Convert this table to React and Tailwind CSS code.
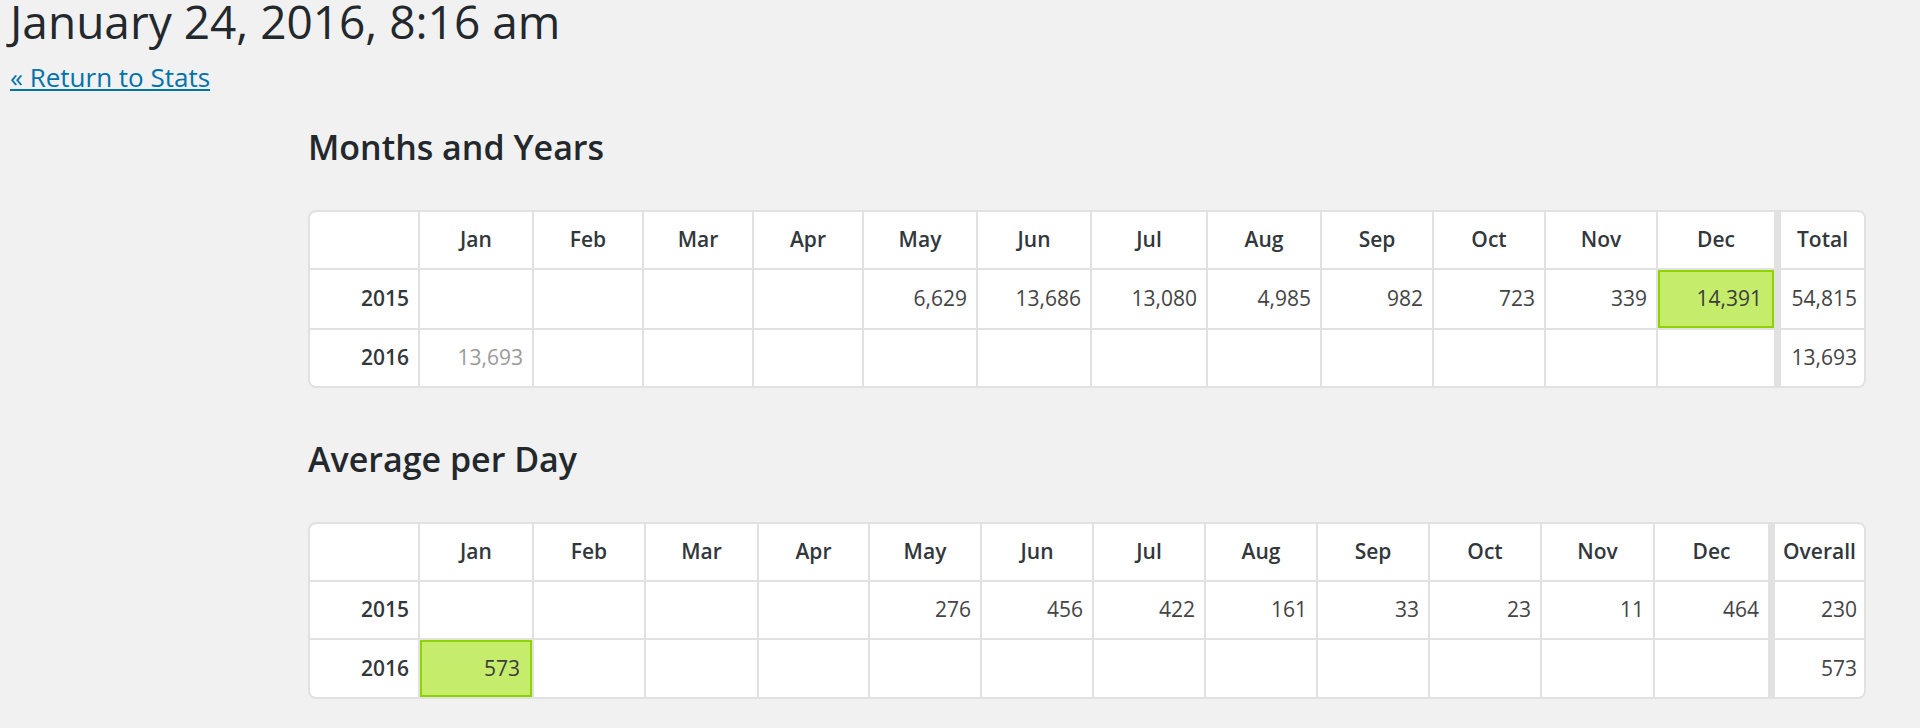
const MONTHS = ['Jan', 'Feb', 'Mar', 'Apr', 'May', 'Jun', 'Jul', 'Aug', 'Sep', 'Oct', 'Nov', 'Dec'];

const monthsYears = {
  last: 'Total',
  rows: [
    {
      year: '2015',
      values: [null, null, null, null, '6,629', '13,686', '13,080', '4,985', '982', '723', '339', '14,391'],
      hi: 11,
      total: '54,815',
    },
    {
      year: '2016',
      values: ['13,693', null, null, null, null, null, null, null, null, null, null, null],
      muted: 0,
      total: '13,693',
    },
  ],
};

const averages = {
  last: 'Overall',
  rows: [
    {
      year: '2015',
      values: [null, null, null, null, '276', '456', '422', '161', '33', '23', '11', '464'],
      total: '230',
    },
    {
      year: '2016',
      values: ['573', null, null, null, null, null, null, null, null, null, null, null],
      hi: 0,
      total: '573',
    },
  ],
};

function StatsTable({ data, gridClass }) {
  return (
    <div className={gridClass}>
      <div className="bg-white" />
      {MONTHS.map((m) => (
        <div key={m} className="bg-white flex items-center justify-center font-semibold text-[#32373c]">
          {m}
        </div>
      ))}
      <div />
      <div className="bg-white flex items-center justify-center font-semibold text-[#32373c] whitespace-nowrap">
        {data.last}
      </div>
      {data.rows.map((r) => [
        <div key={r.year + 'y'} className="bg-white flex items-center justify-end pr-[9px] font-semibold text-[#32373c]">
          {r.year}
        </div>,
        ...r.values.map((v, i) =>
          r.hi === i ? (
            <div
              key={r.year + i}
              className="bg-[#c6ec6c] border-2 border-[#8fd400] flex items-center justify-end pr-[10px] text-[#3c3c3c]"
            >
              {v}
            </div>
          ) : (
            <div
              key={r.year + i}
              className={
                r.muted === i
                  ? 'bg-white flex items-center justify-end pr-[9px] text-[#9a9a9a]'
                  : 'bg-white flex items-center justify-end pr-[9px] text-[#444]'
              }
            >
              {v}
            </div>
          )
        ),
        <div key={r.year + 's'} />,
        <div key={r.year + 't'} className="bg-white flex items-center justify-end pr-[7px] text-[#444]">
          {r.total}
        </div>,
      ])}
    </div>
  );
}

export default function App() {
  return (
    <div className="min-h-screen bg-[#f1f1f1] font-['Open_Sans',sans-serif] text-[#23282d]">
      <div className="pl-[10px]">
        <h1 className="text-[46px] leading-[42px] font-normal">January 24, 2016, 8:16 am</h1>
        <a href="#" className="mt-[22px] block w-fit text-[26px] leading-[26px] text-[#0073aa] underline">
          « Return to Stats
        </a>
      </div>
      <div className="ml-[308px] w-[1558px]">
        <h2 className="mt-[40px] text-[34px] leading-[34px] font-semibold">Months and Years</h2>
        <div className="mt-[46px] text-[21px]">
          <StatsTable
            data={monthsYears}
            gridClass="grid gap-[2px] rounded-lg border-2 border-[#e1e1e1] bg-[#e1e1e1] overflow-hidden grid-cols-[108px_112px_108px_108px_108px_112px_112px_114px_112px_110px_110px_110px_116px_3px_83px] grid-rows-[56px_58px_56px]"
          />
        </div>
        <h2 className="mt-[54px] text-[34px] leading-[34px] font-semibold">Average per Day</h2>
        <div className="mt-[46px] text-[21px]">
          <StatsTable
            data={averages}
            gridClass="grid gap-[2px] rounded-lg border-2 border-[#e1e1e1] bg-[#e1e1e1] overflow-hidden grid-cols-[108px_112px_110px_111px_109px_110px_110px_110px_110px_110px_110px_111px_113px_3px_89px] grid-rows-[56px_56px_57px]"
          />
        </div>
      </div>
    </div>
  );
}
